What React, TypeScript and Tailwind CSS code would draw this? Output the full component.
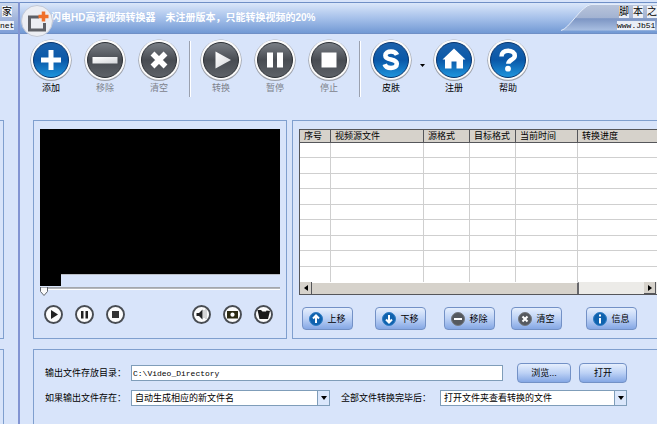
import type { ReactNode } from 'react';

type Tool = {
    label: string;
    disabled?: boolean;
    icon: ReactNode;
};

const fileTools: Tool[] = [
    { label: '添加', icon: <path d="M18.500 11h5v7.500H31v5h-7.500V31h-5v-7.500H11v-5h7.500z" fill="#fff" /> },
    { label: '移除', disabled: true, icon: <path d="M8.500 18h25v6.500h-25z" fill="url(#metal)" /> },
    { label: '清空', disabled: true, icon: <path d="M14.500 14.500l13 13M27.500 14.500l-13 13" stroke="#fff" strokeWidth="5.500" /> },
];

const runTools: Tool[] = [
    { label: '转换', disabled: true, icon: <path d="M15.500 12.500v17L31 21z" fill="url(#metal)" /> },
    { label: '暂停', disabled: true, icon: <path d="M13 13.500h6v15h-6zM23 13.500h6v15h-6z" fill="#fff" /> },
    { label: '停止', disabled: true, icon: <path d="M13.500 13.500h15v15h-15z" fill="#fff" /> },
];

const skinTool: Tool = {
    label: '皮肤',
    icon: (
        <path
            d="M27 15.800c-1-2.300-3.200-3.300-6-3.300-3.300 0-5.600 1.500-5.600 4 0 2.900 2.800 3.500 5.600 4 3 .6 5.800 1.300 5.800 4.300 0 2.800-2.500 4.200-5.800 4.200-3.200 0-5.500-1.200-6.300-3.800"
            fill="none"
            stroke="#fff"
            strokeWidth="4.600"
        />
    ),
};

const helpTools: Tool[] = [
    { label: '注册', icon: <path d="M21 9.500L9.500 20.500h2.500v9h6.500v-7h5v7H30v-9h2.500z" fill="#fff" /> },
    {
        label: '帮助',
        icon: (
            <>
                <path
                    d="M14.500 17.500c0-3.500 2.600-5.800 6.500-5.800s6.800 2 6.800 5c0 4.200-6.500 3.800-6.500 8"
                    fill="none"
                    stroke="#fff"
                    strokeWidth="4.500"
                />
                <circle cx="21" cy="29.700" r="2.900" fill="#fff" />
            </>
        ),
    },
];

const playTools: Tool[] = [
    { label: '播放', icon: <path d="M7 5v9l7-4.500z" fill="#222" /> },
    { label: '暂停播放', icon: <path d="M6 6h2.500v7.500H6zM10.500 6H13v7.500h-2.500z" fill="#222" /> },
    { label: '停止播放', icon: <path d="M6 6h7v7H6z" fill="#333" /> },
];

const captureTools: Tool[] = [
    {
        label: '音量',
        icon: (
            <>
                <path d="M4.500 8h2.500l3.500-3.500v10L7 11H4.500z" fill="#222" />
                <path d="M12 5.500v8M14 4.500v10" stroke="#666" strokeDasharray="1 1" />
            </>
        ),
    },
    {
        label: '截图',
        icon: (
            <>
                <path d="M4 6h11v7.500H4z" fill="#2c2a12" />
                <circle cx="9.500" cy="9.700" r="2.100" fill="#fff" />
            </>
        ),
    },
    { label: '打开截图', icon: <path d="M3.500 5h3.500l1.500 1.500h3.500l.5-1 3.500.5-2 8H5.500z" fill="#1a1a1a" /> },
];

const columns = ['序号', '视频源文件', '源格式', '目标格式', '当前时间', '转换进度'];

const listActions: { label: string; dark?: boolean; icon: ReactNode }[] = [
    { label: '上移', icon: <path d="M7 11V4M4 6.500L7 3.500l3 3" /> },
    { label: '下移', icon: <path d="M7 3v7M4 7.500l3 3 3-3" /> },
    { label: '移除', dark: true, icon: <path d="M3 7h8" /> },
    { label: '清空', dark: true, icon: <path d="M4.500 4.500l5 5M9.500 4.500l-5 5" /> },
    { label: '信息', icon: <path d="M7 6v5.500M7 2.500v2" /> },
];

function ToolButton({ tool }: { tool: Tool }) {
    return (
        <button
            type="button"
            disabled={tool.disabled}
            className={`flex w-[54px] shrink-0 flex-col items-center gap-px leading-3 ${tool.disabled ? 'text-[#7d828b]' : 'text-black'}`}
        >
            <svg viewBox="0 0 42 42" className="size-[42px]" aria-hidden="true">
                <circle cx="21" cy="21.300" r="20.700" fill="#9da1aa" />
                <circle cx="21" cy="20.800" r="20" fill="#fafafa" />
                <circle cx="21" cy="21" r="17.500" fill={tool.disabled ? 'url(#gray)' : 'url(#blue)'} stroke={tool.disabled ? '#2c3035' : '#08356e'} />
                {tool.icon}
            </svg>
            {tool.label}
        </button>
    );
}

function Divider() {
    return <div className="mx-[3px] mt-0.5 h-[56px] w-0.5 shrink-0 border-r border-l border-r-white border-l-[#9aa0ae]" />;
}

function MediaButton({ tool }: { tool: Tool }) {
    return (
        <button type="button" aria-label={tool.label}>
            <svg viewBox="0 0 19 19" className="size-[19px]" aria-hidden="true">
                <circle cx="9.500" cy="9.500" r="8.500" fill="#fcfcfc" stroke="#484c52" strokeWidth="1.900" />
                {tool.icon}
            </svg>
        </button>
    );
}

function GlossButton({ children, className }: { children: ReactNode; className: string }) {
    return (
        <button
            type="button"
            className={`flex items-center justify-center rounded-sm border border-[#7391c6] bg-linear-to-b from-[#e6effd] via-[#bcd1f5] to-[#85a7e4] leading-3 ${className}`}
        >
            {children}
        </button>
    );
}

function SelectBox({ id, value, className }: { id: string; value: string; className: string }) {
    return (
        <div className={`relative ${className}`}>
            <select id={id} className="block h-4 w-full appearance-none border border-[#7f9db9] bg-white pl-[3px] leading-3">
                <option>{value}</option>
            </select>
            <span className="pointer-events-none absolute inset-y-px right-px flex w-3 items-center justify-center border-l border-[#7f9db9] bg-[#dbe7fb]">
                <svg viewBox="0 0 6 4" className="h-1 w-1.5" aria-hidden="true">
                    <path d="M0 0h6L3 4z" />
                </svg>
            </span>
        </div>
    );
}

/* Sliver of the neighbouring window on the left */
function LeftEdge() {
    return (
        <div className="flex w-5 shrink-0 flex-col border-r-2 border-[#8294d2]">
            <div className="h-8 border-y border-[#6f8fc6] bg-linear-to-b from-[#ccd9ee] via-[#a3b6dc] to-[#7f9fd8] leading-3">
                <div className="pt-[3px] pl-0.5 text-[10px]">
                    <span className="bg-white/80">家</span>
                </div>
                <div className="mt-0.5 font-['Liberation_Mono',monospace] text-[8px]">
                    <span className="bg-white/80">net</span>
                </div>
            </div>
            <div className="mt-[86px] h-[219px] w-1 border-y border-r border-[#7f9fce]" />
            <div className="mt-2.5 w-1 flex-1 border-t border-r border-[#7f9fce]" />
        </div>
    );
}

function TitleBar() {
    return (
        <header className="relative flex h-8 items-center border-y border-[#6f8fc6] bg-linear-to-b from-[#dbe7fa] via-[#a6c1ea] to-[#7299d4] pl-[31px]">
            <svg viewBox="0 0 32 32" className="absolute top-0.5 left-px size-8" aria-hidden="true">
                <circle cx="16" cy="16" r="15.500" fill="#eceef3" stroke="#c3c9d6" />
                <path d="M18 12H8.500v13h15v-7" fill="none" stroke="#5e6066" strokeWidth="3" />
                <path d="M22.500 6.500v10M17.500 11.500h10" stroke="#f0702a" strokeWidth="3.500" />
            </svg>
            <h1 className="text-[10px] font-bold whitespace-pre text-white">闪电HD高清视频转换器　未注册版本，只能转换视频的20%</h1>
            <svg viewBox="0 0 96 30" preserveAspectRatio="none" className="absolute top-0 right-0 h-[30px] w-24 bg-none" aria-hidden="true">
                <path d="M0 27.500C8 26 20 3 30 1.500H96v26z" fill="url(#corner)" />
                <path d="M0 27.500C8 26 20 3 30 1.500H96" fill="none" stroke="#e3ecfa" />
            </svg>
            <div className="absolute top-[3px] right-0 w-10 leading-3">
                <div className="flex gap-1 pl-0.5 text-[10px]">
                    <span className="bg-white/80">脚</span>
                    <span className="bg-white/80">本</span>
                    <span className="bg-white/80">之</span>
                </div>
                <div className="mt-0.5 font-['Liberation_Mono',monospace] text-[8px]">
                    <span className="bg-white/80">www.Jb51</span>
                </div>
            </div>
        </header>
    );
}

function Player() {
    return (
        <section className="flex w-[254px] shrink-0 flex-col border border-[#7f9fce] px-1.5 pt-2">
            <div className="relative h-[146px] border-b border-[#b9bdc4] bg-black">
                <div className="absolute top-full left-0 h-3 w-[21px] bg-black" />
            </div>
            <div className="relative mt-3 h-2.5">
                <input
                    type="range"
                    aria-label="播放进度"
                    defaultValue={0}
                    className="block h-[3px] w-full appearance-none border-t border-b border-t-[#a3a6ab] border-b-white bg-[#b4b7bc] [&::-webkit-slider-thumb]:h-2 [&::-webkit-slider-thumb]:w-2 [&::-webkit-slider-thumb]:appearance-none"
                />
                <svg viewBox="0 0 8 9" className="pointer-events-none absolute top-0 left-0 h-[9px] w-2" aria-hidden="true">
                    <path d="M.5 0v4.500L4 8.500l3.500-4V0z" fill="#fafafa" stroke="#5f656d" />
                </svg>
            </div>
            <div className="mt-2 flex justify-between pr-[7px] pl-1">
                <div className="flex gap-3">
                    {playTools.map((tool) => (
                        <MediaButton key={tool.label} tool={tool} />
                    ))}
                </div>
                <div className="flex gap-3">
                    {captureTools.map((tool) => (
                        <MediaButton key={tool.label} tool={tool} />
                    ))}
                </div>
            </div>
        </section>
    );
}

function FileList() {
    return (
        <section className="min-w-0 flex-1 border-y border-l border-[#7f9fce] pt-2 pb-2 pl-1.5">
            <div className="border-t border-b border-l border-[#55565a] bg-white">
                <table className="w-full table-fixed border-separate border-spacing-0">
                    <colgroup>
                        <col className="w-[31px]" />
                        <col className="w-[93px]" />
                        <col className="w-[46px]" />
                        <col className="w-[46px]" />
                        <col className="w-[62px]" />
                        <col />
                    </colgroup>
                    <thead>
                        <tr className="bg-[#d6d2cb]">
                            {columns.map((column) => (
                                <th
                                    key={column}
                                    className="h-[13px] border-r border-b border-[#55565a] p-0 pl-1 text-left leading-3 font-normal whitespace-nowrap last:border-r-0"
                                >
                                    {column}
                                </th>
                            ))}
                        </tr>
                    </thead>
                    <tbody>
                        {Array.from({ length: 9 }, (_, row) => (
                            <tr key={row} className="group h-4 odd:h-[15px]">
                                {columns.map((column) => (
                                    <td key={column} className="border-r border-b border-[#cfcfcf] p-0 group-last:border-b-0 last:border-r-0" />
                                ))}
                            </tr>
                        ))}
                    </tbody>
                </table>
                {/* Horizontal scrollbar */}
                <div className="flex h-3 bg-[#ecebe8]">
                    <button type="button" aria-label="向左滚动" className="flex w-3 items-center justify-center border-r border-[#55565a] bg-[#d6d2cb]">
                        <svg viewBox="0 0 4 6" className="h-1.5 w-1" aria-hidden="true">
                            <path d="M4 0v6L0 3z" />
                        </svg>
                    </button>
                    <div className="w-[267px] border-t border-r-2 border-t-white border-r-[#66666a] bg-[#d6d2cb]" />
                    <button
                        type="button"
                        aria-label="向右滚动"
                        className="mr-px ml-auto flex w-3 items-center justify-center border-r border-b border-[#55565a] bg-[#d6d2cb]"
                    >
                        <svg viewBox="0 0 4 6" className="h-1.5 w-1" aria-hidden="true">
                            <path d="M0 0v6l4-3z" />
                        </svg>
                    </button>
                </div>
            </div>
            <div className="mt-3 grid grid-cols-[73px_69px_67px_75px_53px] pl-[3px]">
                {listActions.map((action) => (
                    <GlossButton key={action.label} className="h-[23px] w-[51px] gap-1">
                        <svg viewBox="0 0 14 14" className="size-3.5" aria-hidden="true">
                            <circle cx="7" cy="7" r="6.500" fill={action.dark ? '#55595f' : '#0f62ae'} stroke={action.dark ? '#74787e' : '#2f7cc4'} />
                            <g fill="none" stroke="#fff" strokeWidth="2">
                                {action.icon}
                            </g>
                        </svg>
                        {action.label}
                    </GlossButton>
                ))}
            </div>
        </section>
    );
}

function OutputSettings() {
    return (
        <section className="flex flex-1 flex-col gap-[7px] border-t border-l border-[#7f9fce] pt-[13px] pr-[30px] pl-[11px]">
            <div className="flex items-center">
                <label htmlFor="directory" className="w-[86px] shrink-0">
                    输出文件存放目录：
                </label>
                <input
                    id="directory"
                    type="text"
                    defaultValue="C:\Video_Directory"
                    className="h-4 min-w-0 flex-1 border border-[#7f9db9] bg-white px-px font-['Liberation_Mono',monospace] text-[8px]"
                />
                <GlossButton className="ml-3.5 h-5 w-[54px]">浏览...</GlossButton>
                <GlossButton className="ml-2 h-5 w-12">打开</GlossButton>
            </div>
            <div className="flex items-center">
                <label htmlFor="exists" className="w-[86px] shrink-0">
                    如果输出文件存在：
                </label>
                <SelectBox id="exists" value="自动生成相应的新文件名" className="w-[199px]" />
                <label htmlFor="after" className="ml-[11px] w-[99px] shrink-0">
                    全部文件转换完毕后：
                </label>
                <SelectBox id="after" value="打开文件夹查看转换的文件" className="min-w-0 flex-1" />
            </div>
        </section>
    );
}

function Gradients() {
    return (
        <svg className="absolute size-0" aria-hidden="true">
            <defs>
                <linearGradient id="blue" x1="0" y1="0" x2="0" y2="1">
                    <stop offset="0" stopColor="#1c62ac" />
                    <stop offset="0.5" stopColor="#0a58a8" />
                    <stop offset="1" stopColor="#1f96de" />
                </linearGradient>
                <linearGradient id="gray" x1="0" y1="0" x2="0" y2="1">
                    <stop offset="0" stopColor="#7b8087" />
                    <stop offset="0.5" stopColor="#484c52" />
                    <stop offset="1" stopColor="#5e6268" />
                </linearGradient>
                <linearGradient id="metal" x1="0" y1="0" x2="1" y2="1">
                    <stop offset="0" stopColor="#fff" />
                    <stop offset="1" stopColor="#d4d6da" />
                </linearGradient>
                <linearGradient id="corner" x1="0" y1="0" x2="0" y2="1">
                    <stop offset="0" stopColor="#b9c5db" />
                    <stop offset="0.5" stopColor="#a3b3d2" />
                    <stop offset="0.55" stopColor="#7d96c4" />
                    <stop offset="1" stopColor="#a9bfe2" />
                </linearGradient>
            </defs>
        </svg>
    );
}

export default function App() {
    return (
        <div className="flex min-h-screen overflow-hidden bg-[#d8e4fa] pt-0.5 font-['Liberation_Sans','Noto_Sans_CJK_SC',sans-serif] text-[9px] leading-3 text-black">
            <Gradients />
            <LeftEdge />
            <main className="flex min-w-0 flex-1 flex-col">
                <TitleBar />
                <nav className="flex h-[86px] pt-[5px] pl-1">
                    {fileTools.map((tool) => (
                        <ToolButton key={tool.label} tool={tool} />
                    ))}
                    <Divider />
                    {runTools.map((tool) => (
                        <ToolButton key={tool.label} tool={tool} />
                    ))}
                    <Divider />
                    <ToolButton tool={skinTool} />
                    <button type="button" aria-label="选择皮肤" className="mt-6 h-1 w-[9px] shrink-0">
                        <svg viewBox="0 0 5 3" className="mx-auto h-[3px] w-[5px]" aria-hidden="true">
                            <path d="M0 0h5L2.500 3z" />
                        </svg>
                    </button>
                    {helpTools.map((tool) => (
                        <ToolButton key={tool.label} tool={tool} />
                    ))}
                </nav>
                <div className="flex flex-1 flex-col gap-2.5 pl-[13px]">
                    <div className="flex gap-[5px]">
                        <Player />
                        <FileList />
                    </div>
                    <OutputSettings />
                </div>
            </main>
        </div>
    );
}
